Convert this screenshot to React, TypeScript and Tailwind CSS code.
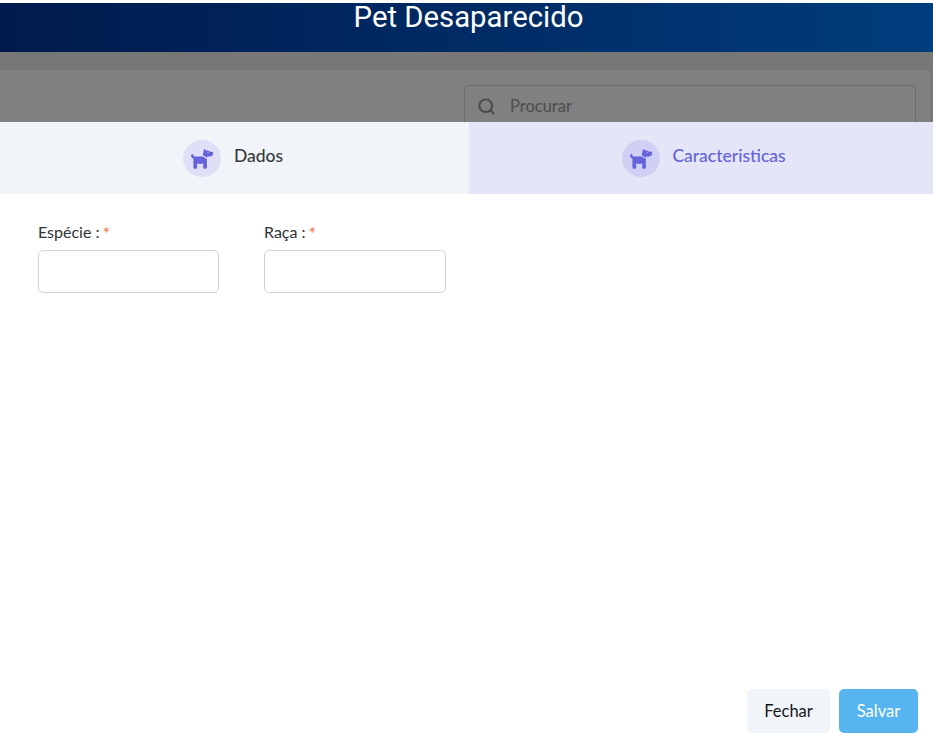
import { FaDog } from "react-icons/fa6";
import { Search } from "lucide-react";

const font = "font-['Lato','Noto_Sans',sans-serif]";

const Tab = ({ label, active }: { label: string; active?: boolean }) => {
    return (
        <div className={`flex items-center justify-center h-[72px] pt-[1px] ${active ? "w-[464px] gap-[12px] pl-[6px] bg-[#e4e5f7] text-[#6563d9]" : "w-[469px] gap-[13px] pr-[3px] bg-[#f1f4f8] text-[#35393d]"}`}>
            <div className={`flex items-center justify-center w-[38px] h-[37px] rounded-full ${active ? "bg-[#d0d0f5]" : "bg-[#dfdff7]"}`}>
                <FaDog className="w-[22px] h-[22px] text-[#6563d9]" />
            </div>
            <span className="pb-[5px] text-[17.5px] font-medium leading-none">{label}</span>
        </div>
    )
}

const Field = ({ label, width }: { label: string; width: string }) => {
    return (
        <div className={`flex flex-col gap-[8px] ${width}`}>
            <label className="text-[16px] leading-[20px] text-[#2f3337]">
                {label} :<span className="ml-[3px] text-[18px] leading-none align-[-2px] text-[#f0743e]">*</span>
            </label>
            <input className="h-[43px] w-full rounded-[5px] border border-[#d3d3d3] bg-white" />
        </div>
    )
}

export default function App() {
    return (
        <div className={`flex flex-col w-[933px] h-[750px] pt-[3px] bg-white overflow-hidden ${font}`}>
            <div className="flex justify-center h-[49px] pl-[4px] bg-gradient-to-r from-[#001a4d] to-[#003d7d]">
                <h1 className="font-['Roboto',sans-serif] text-[29.3px] leading-[28px] text-white">Pet Desaparecido</h1>
            </div>
            <div className="h-[70px] pt-[18px] bg-[#777777] overflow-hidden">
                <div className="w-[930px] h-[60px] pt-[15px] pl-[464px] pr-[14px] bg-[#808080] rounded-tr-[4px]">
                    <div className="flex items-center gap-[14px] h-[44px] pl-[12px] pb-[2px] rounded-[4px] border border-[#6b6b6b]">
                        <Search className="w-[19px] h-[19px] text-[#4a4a4a]" strokeWidth={2.5} />
                        <span className="text-[16.5px] text-[#4d4d4d]">Procurar</span>
                    </div>
                </div>
            </div>
            <div className="flex">
                <Tab label="Dados" />
                <Tab label="Caracteristicas" active />
            </div>
            <div className="flex gap-[45px] pt-[28px] pl-[38px]">
                <Field label="Espécie" width="w-[181px]" />
                <Field label="Raça" width="w-[182px]" />
            </div>
            <div className="flex justify-end gap-[9px] mt-auto mb-[17px] pr-[15px]">
                <button className="w-[83px] h-[44px] rounded-[5px] bg-[#f1f4f8] text-[16.5px] text-[#14181b]">Fechar</button>
                <button className="w-[79px] h-[44px] rounded-[5px] bg-[#56b5f0] text-[16.5px] text-white">Salvar</button>
            </div>
        </div>
    )
}
